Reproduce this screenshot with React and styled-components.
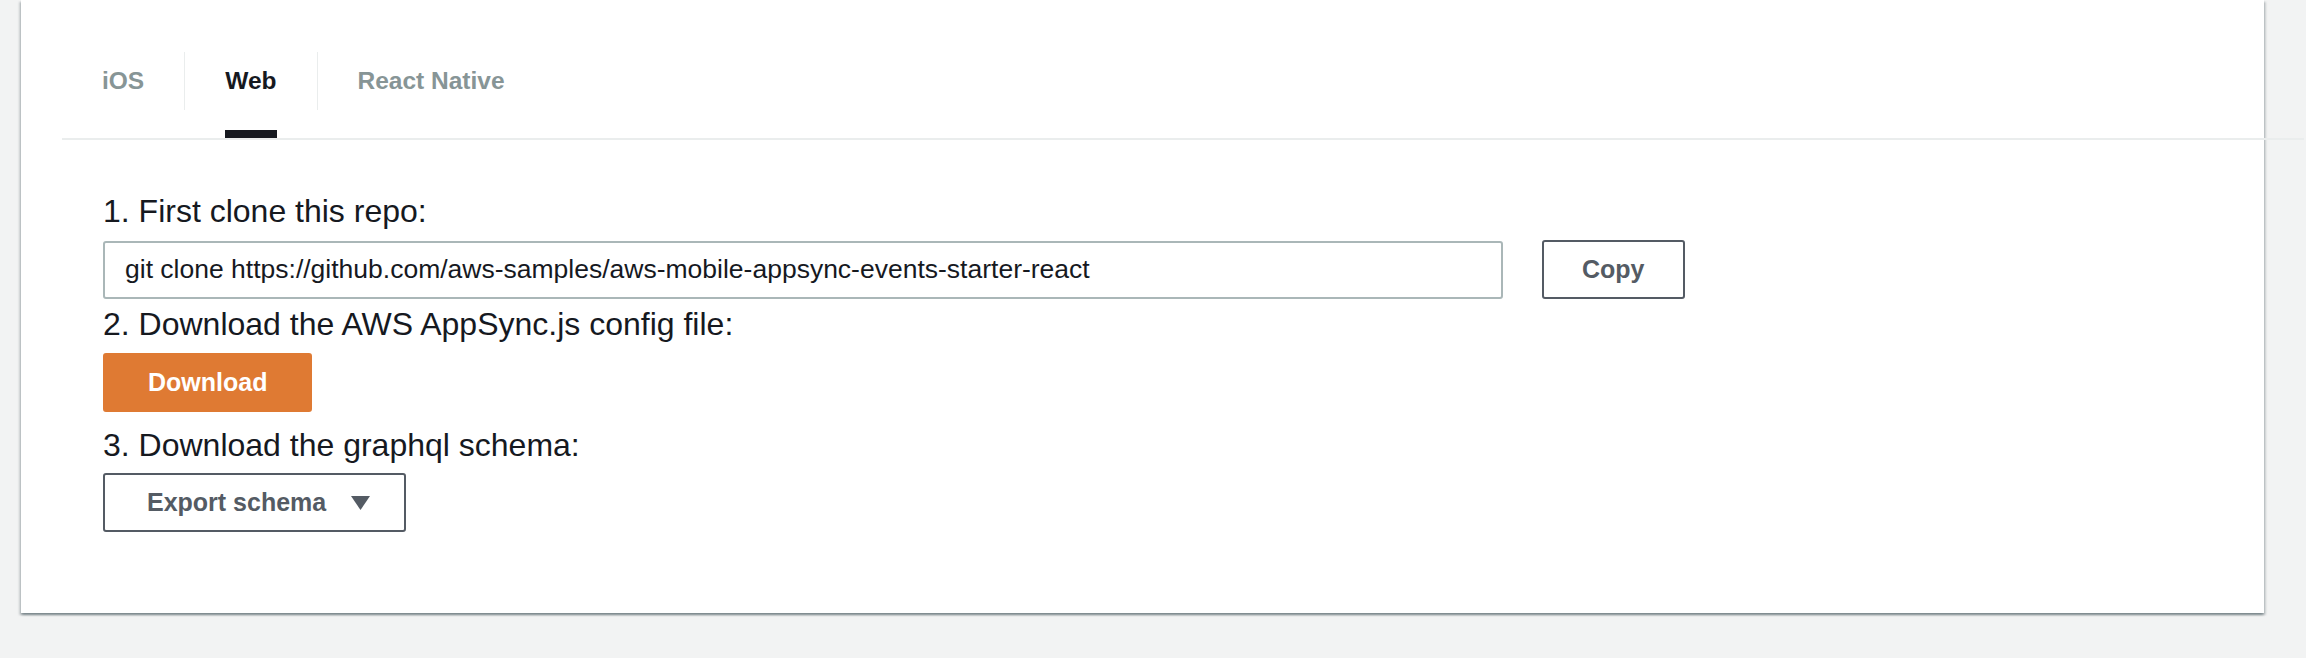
import React, { useState } from "react";
import styled, { createGlobalStyle } from "styled-components";

const GlobalStyle = createGlobalStyle`
  html, body {
    margin: 0;
    padding: 0;
    background: #f2f3f3;
  }
  body {
    font-family: "Liberation Sans", Arial, sans-serif;
    color: #16191f;
  }
`;

const Page = styled.div`
  width: 2306px;
  height: 658px;
  padding: 0 42px 0 21px;
  box-sizing: border-box;
  overflow: hidden;
`;

const Card = styled.div`
  background: #fff;
  padding: 0 0 81px 41px;
  box-shadow: 0 2px 2px 0 rgba(0, 28, 36, 0.3),
    2px 2px 2px 0 rgba(0, 28, 36, 0.15),
    -2px 2px 2px 0 rgba(0, 28, 36, 0.15);
`;

const TabBar = styled.div`
  display: flex;
  border-bottom: 2px solid #eaeded;
  margin-right: -40px;
`;

const Tab = styled.div`
  display: flex;
  flex-direction: column;
  padding-top: 52px;
  cursor: pointer;
`;

const TabLabel = styled.span`
  height: 58px;
  line-height: 58px;
  padding: 0 40px;
  border-left: ${(p) => (p.$first ? "none" : "1px solid #eaeded")};
  font-size: 24.5px;
  font-weight: 700;
  color: ${(p) => (p.$active ? "#16191f" : "#879596")};
`;

const Indicator = styled.span`
  height: 8px;
  margin: 20px 40px 0 ${(p) => (p.$first ? "40px" : "41px")};
  background: ${(p) => (p.$active ? "#16191f" : "transparent")};
`;

const Content = styled.div`
  padding: 51px 0 0 41px;
`;

const StepTitle = styled.div`
  font-size: 32px;
  line-height: 40px;
  margin: ${(p) => p.$top || 0}px 0 ${(p) => p.$bottom || 9}px;
`;

const Row = styled.div`
  display: flex;
  align-items: center;
  gap: 39px;
`;

const CommandInput = styled.input`
  width: 1400px;
  height: 58px;
  box-sizing: border-box;
  border: 2px solid #aab7b8;
  border-radius: 3px;
  padding: 0 20px;
  font-family: inherit;
  font-size: 26.5px;
  color: #16191f;
  background: #fff;
  outline: none;
`;

const Button = styled.button`
  display: inline-flex;
  align-items: center;
  height: 59px;
  box-sizing: border-box;
  padding: ${(p) => p.$pad || "0 40px"};
  border: 2px solid ${(p) => (p.$primary ? "#df7a33" : "#545b64")};
  border-radius: 3px;
  background: ${(p) => (p.$primary ? "#df7a33" : "#fff")};
  color: ${(p) => (p.$primary ? "#fff" : "#545b64")};
  font-family: inherit;
  font-size: 25px;
  font-weight: 700;
  cursor: pointer;
`;

const Caret = styled.svg`
  margin-left: 25px;
  display: block;
`;

const tabs = ["iOS", "Web", "React Native"];
const repo =
  "git clone https://github.com/aws-samples/aws-mobile-appsync-events-starter-react";

const App = () => {
  const [active, setActive] = useState("Web");

  return (
    <Page>
      <GlobalStyle />
      <Card>
        <TabBar>
          {tabs.map((t, i) => (
            <Tab key={t} onClick={() => setActive(t)}>
              <TabLabel $first={i === 0} $active={t === active}>
                {t}
              </TabLabel>
              <Indicator $first={i === 0} $active={t === active} />
            </Tab>
          ))}
        </TabBar>
        <Content>
          <StepTitle>1. First clone this repo:</StepTitle>
          <Row>
            <CommandInput readOnly value={repo} />
            <Button $pad="0 38px">Copy</Button>
          </Row>
          <StepTitle $top={5} $bottom={9}>
            2. Download the AWS AppSync.js config file:
          </StepTitle>
          <Button $primary $pad="0 43px">
            Download
          </Button>
          <StepTitle $top={13} $bottom={8}>
            3. Download the graphql schema:
          </StepTitle>
          <Button $pad="0 34px 0 42px">
            Export schema
            <Caret width="19" height="14" viewBox="0 0 19 14">
              <polygon points="0,0 19,0 9.5,14" fill="#545b64" />
            </Caret>
          </Button>
        </Content>
      </Card>
    </Page>
  );
};

export default App;
